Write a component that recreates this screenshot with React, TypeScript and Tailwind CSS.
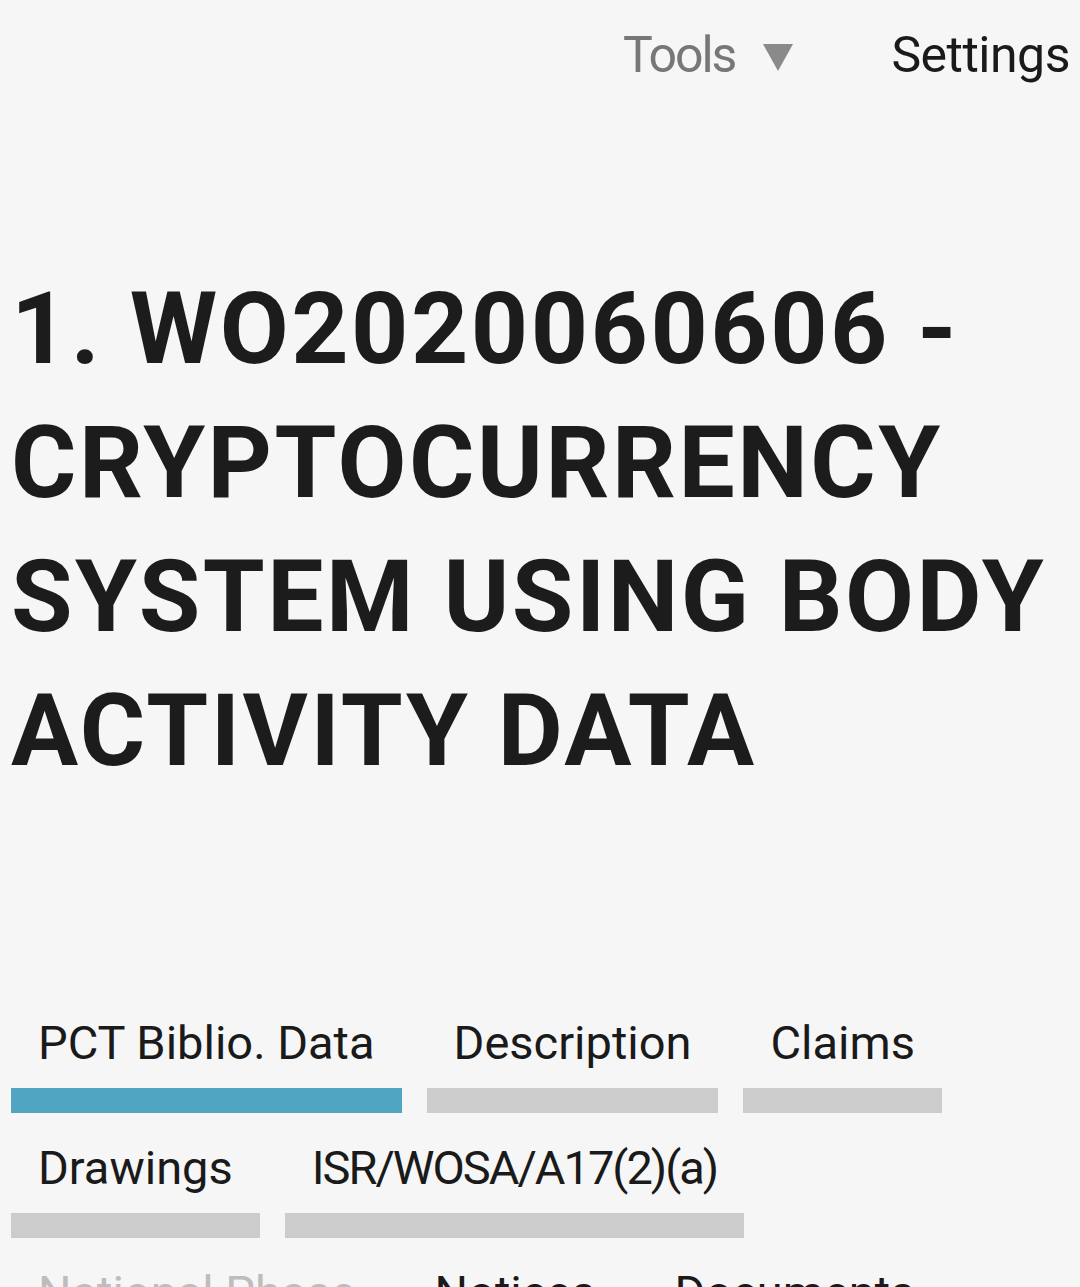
import React from "react";

const tabsRows: { label: string; active?: boolean; muted?: boolean; tight?: boolean }[][] = [
  [{ label: "PCT Biblio. Data", active: true }, { label: "Description" }, { label: "Claims" }],
  [{ label: "Drawings" }, { label: "ISR/WOSA/A17(2)(a)", tight: true }],
  [{ label: "National Phase", muted: true }, { label: "Notices" }, { label: "Documents" }],
];

const headingLines = ["1. WO2020060606 -", "CRYPTOCURRENCY", "SYSTEM USING BODY", "ACTIVITY DATA"];

export default function App() {
  return (
    <div
      className="w-[1080px] h-[1287px] overflow-hidden bg-[#f6f6f6]"
      style={{ fontFamily: "Roboto, 'Liberation Sans', sans-serif" }}
    >
      <div className="flex justify-end items-center h-[110px] pr-[10px]">
        <div className="flex items-center text-[50px] text-[#777777] leading-none tracking-[-2px]">
          <span>Tools</span>
          <svg className="ml-[28px] mt-[4px]" width="30" height="27" viewBox="0 0 30 27">
            <polygon points="0,0 30,0 15,27" fill="#8a8a8a" />
          </svg>
        </div>
        <div className="ml-[98px] text-[50px] text-[#1a1a1a] leading-none tracking-[-0.5px]">Settings</div>
      </div>
      <h1 className="mt-[152px] pl-[11px] text-[100px] font-bold leading-[134px] tracking-[2.5px] text-[#1c1c1c]">
        {headingLines.map((l) => (
          <span key={l} className="block whitespace-nowrap">
            {l}
          </span>
        ))}
      </h1>
      <div className="mt-[209px] pl-[11px] flex flex-col">
        {tabsRows.map((row, i) => (
          <div key={i} className="flex gap-[25px] h-[125px]">
            {row.map((t) => (
              <div key={t.label} className="flex flex-col">
                <div
                  className={
                    "px-[27px] text-[47px] leading-none pt-[12px] h-[81px] whitespace-nowrap " +
                    (t.tight ? "tracking-[-2px] " : "") +
                    (t.muted ? "text-[#bdbdbd]" : "text-[#1a1a1a]")
                  }
                >
                  {t.label}
                </div>
                <div className={"h-[25px] " + (t.active ? "bg-[#50a6c2]" : "bg-[#cccccc]")} />
              </div>
            ))}
          </div>
        ))}
      </div>
    </div>
  );
}
